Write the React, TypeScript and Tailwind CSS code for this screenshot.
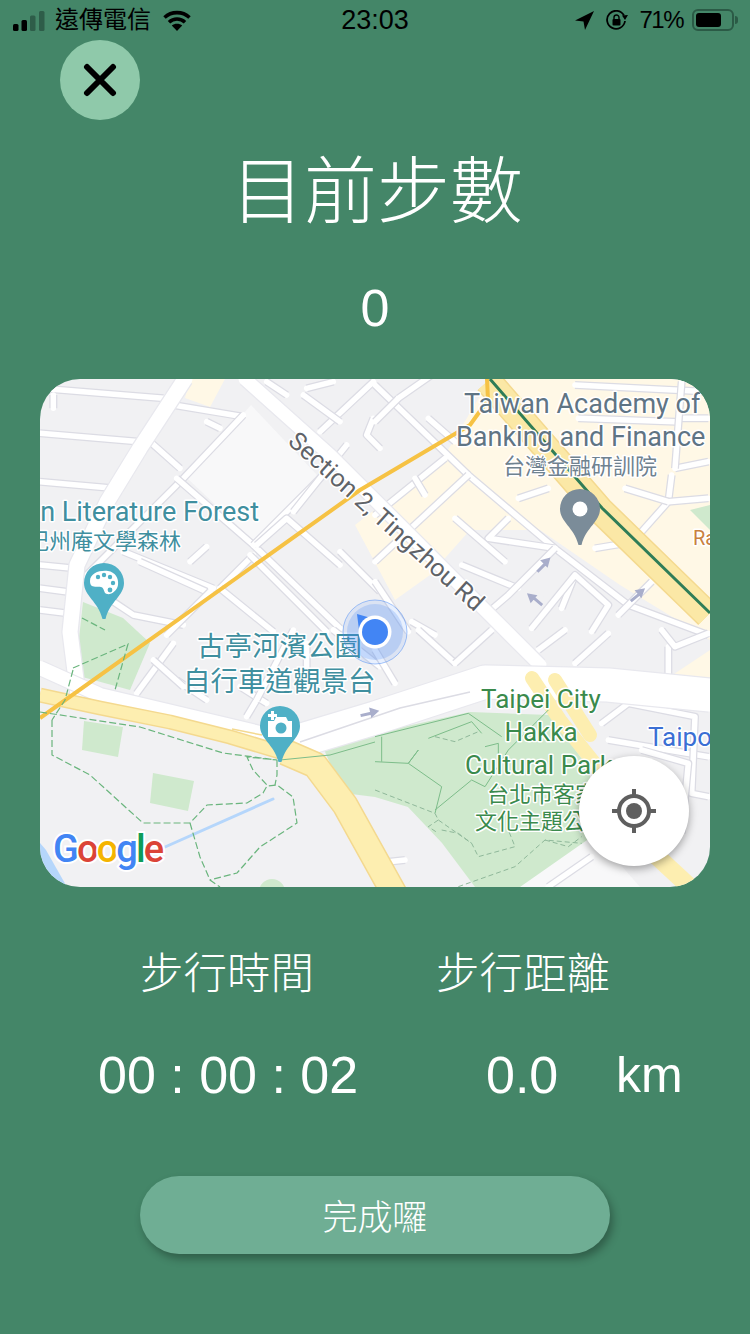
import React from "react";

const cjk = '"Noto Sans CJK TC", "Noto Sans CJK SC", sans-serif';

// streets are noted per map quarter, each quarter has its own origin and is 3x
const fromQuarter = (ox: number, oy: number, list: string[]) =>
  list.map((s) =>
    s
      .split(" ")
      .map((p) => {
        const [x, y] = p.split(",").map(Number);
        return `${x / 3 + ox},${y / 3 + oy}`;
      })
      .join(" ")
  );

const streets: string[] = [
  ...fromQuarter(40, 375, [
    "0,40 370,70",
    "400,90 610,125",
    "0,175 300,200",
    "0,320 220,340",
    "0,570 100,580",
    "0,640 80,650",
    "0,705 80,715",
    "610,120 430,310 270,470 130,610",
    "330,200 420,280",
    "410,310 640,510 900,760",
    "640,510 850,300",
    "650,510 740,430 900,570",
    "540,640 640,540",
    "630,540 860,770",
    "250,530 520,640",
    "300,560 500,650",
    "450,560 500,515",
    "760,410 920,210",
    "840,170 1000,20",
    "790,60 900,140",
    "800,40 880,20",
    "680,20 740,60",
    "220,680 280,720 430,750",
    "510,650 380,780",
    "900,530 1020,650",
    "540,640 700,770",
    "40,60 40,100",
    "500,140 540,160",
    "1000,130 980,180 1020,220",
  ]),
  ...fromQuarter(375, 375, [
    "0,30 280,300 540,520 760,690 1000,780",
    "70,70 0,140",
    "170,0 70,70",
    "280,300 0,560",
    "210,250 0,420",
    "120,310 150,360",
    "400,430 340,490 540,520",
    "240,430 390,560",
    "260,570 430,640",
    "540,520 400,660 330,720",
    "600,600 560,700",
    "430,370 520,340",
    "660,520 780,500",
    "890,300 880,380 800,470",
    "880,380 1000,370",
    "910,130 1000,130",
    "900,280 1000,260",
    "600,30 1000,50",
    "610,130 900,140",
    "830,620 730,720",
    "110,740 180,780",
    "0,620 100,770",
    "470,760 600,600 700,690 650,770",
    "160,130 240,200",
    "750,340 880,380",
    "920,20 900,280",
  ]),
  ...fromQuarter(40, 630, [
    "400,40 290,190",
    "410,150 500,210",
    "650,210 620,260",
    "340,90 430,170",
    "600,170 680,220",
    "760,0 650,210",
    "880,0 1020,110",
    "800,40 800,130",
  ]),
  ...fromQuarter(375, 630, [
    "130,0 240,100",
    "240,100 350,0",
    "490,60 570,0",
    "600,100 700,10",
    "880,50 880,140",
    "0,60 60,160",
    "700,330 1000,380",
    "680,280 760,220 960,260 950,490 1000,500",
    "800,360 940,400 920,610",
    "520,770 650,680",
    "1000,10 900,50 860,0",
    "0,700 90,690",
  ]),
];

const parkLines = fromQuarter(375, 630, [
  "0,320 280,250 380,320",
  "0,395 100,400 130,360 100,400 200,470 180,550",
  "290,450 180,540",
  "160,325 290,275 320,310",
  "290,450 330,470 400,360 520,240",
  "20,320 20,395",
  "330,350 370,340 370,400",
]);

const parkDashes = fromQuarter(375, 630, [
  "0,480 180,550 190,570 290,640 310,680 420,650 400,600",
  "200,600 250,610 290,640",
  "250,770 420,710 510,630 620,640",
  "190,570 160,590 190,610",
  "510,630 580,650 620,620",
  "180,320 240,335 310,305",
]);

function Road({ points, width, casing }: { points: string; width: number; casing: string }) {
  return (
    <>
      <polyline points={points} fill="none" stroke={casing} strokeWidth={width + 2.5} strokeLinejoin="round" />
      <polyline points={points} fill="none" stroke="#ffffff" strokeWidth={width} strokeLinecap="round" strokeLinejoin="round" />
    </>
  );
}

function Pin({ x, y, color, children }: { x: number; y: number; color: string; children: React.ReactNode }) {
  return (
    <g transform={`translate(${x} ${y})`}>
      <path d="M-20 0A20 20 0 1 1 20 0C20 13 6 18 1.5 36L-1.5 36C-6 18-20 13-20 0Z" fill={color} />
      {children}
    </g>
  );
}

function OneWay({ x, y, rot }: { x: number; y: number; rot: number }) {
  return (
    <path
      d="M-8 0L2 0L2-4L9 0L2 4L2 1.5L-8 1.5Z"
      transform={`translate(${x} ${y}) rotate(${rot})`}
      fill="#a9aecb"
      stroke="#a9aecb"
      strokeWidth={1.5}
    />
  );
}

function MapLabel({ x, y, size, color, anchor, text }: { x: number; y: number; size: number; color: string; anchor?: "start" | "middle" | "end"; text: string }) {
  return (
    <text x={x} y={y} fontSize={size} fill={color} textAnchor={anchor ?? "start"} stroke="#fff" strokeWidth={3} paintOrder="stroke" strokeLinejoin="round" fontFamily={`Roboto, ${cjk}`}>
      {text}
    </text>
  );
}

function MapDrawing() {
  return (
    <svg viewBox="40 379 670 508" className="block w-full h-full">
      <rect x="40" y="379" width="670" height="508" fill="#f1f1f3" />

      {/* the pale block under the road name, and the pale ground south of the big road */}
      <polygon points="251,405 317,475 254,541 187,478" fill="#f8f8f9" />
      <polygon points="440,887 500,887 590,830 640,887" fill="#f8f8f9" />

      {/* cream blocks on the right */}
      <polygon points="355,525 445,455 490,379 710,379 710,640 620,585 540,530 470,530 430,575 395,600" fill="#fff8e6" />
      <polygon points="190,379 225,379 210,407 185,398" fill="#fff8e6" />
      <polygon points="650,690 710,650 710,690" fill="#fff8e6" />
      <polygon points="540,540 600,590 560,610 500,560" fill="#f1f1f3" />
      <polygon points="430,580 470,545 510,600 480,610" fill="#f1f1f3" />

      {/* parks */}
      <polygon points="83,602 123,618 150,643 130,690 75,675" fill="#cfe9cd" />
      <polygon points="84,721 123,727 118,757 82,750" fill="#cfe9cd" />
      <polygon points="153,773 194,781 188,811 150,803" fill="#cfe9cd" />
      <polygon points="322,745 470,712 550,715 590,770 590,838 520,887 475,887 442,843 408,807 375,797 343,793" fill="#cfe9cd" />
      <polygon points="690,510 710,505 710,530" fill="#cfe9cd" />
      <circle cx="272" cy="892" r="13" fill="#cfe9cd" />

      {/* water */}
      <polygon points="40,843 46,850 67,887 40,887" fill="#b5d6fb" />
      <polyline points="165,847 273,799" stroke="#b5d6fb" strokeWidth={3} fill="none" strokeLinecap="round" />
      <polygon points="372,835 375,845 370,845" fill="#b5d6fb" />

      {streets.map((points) => (
        <Road key={points} points={points} width={5.5} casing="#dcdce4" />
      ))}

      {/* main white roads */}
      <Road points="185,379 140,448 107,502 77,565 70,632 78,695" width={15} casing="#e8e8ee" />
      <Road points="245,379 330,455 490,615 540,665" width={13} casing="#e8e8ee" />
      <Road points="40,668 100,695 260,733 300,745" width={14} casing="#e8e8ee" />
      <Road points="295,742 375,718 485,682 608,685 710,695" width={33} casing="#e8e8ee" />
      <polyline points="300,742 400,708 470,692" stroke="#dcdce4" strokeWidth={1.5} fill="none" />

      {/* yellow highways */}
      <polyline points="40,695 100,708 170,722 230,737 290,755" fill="none" stroke="#f4d98f" strokeWidth={15} strokeLinejoin="round" />
      <polyline points="40,695 100,708 170,722 230,737 290,755" fill="none" stroke="#fdeeb0" strokeWidth={12} strokeLinejoin="round" />
      <polyline points="285,752 315,765 345,805 395,895" fill="none" stroke="#f4d98f" strokeWidth={27} strokeLinejoin="round" />
      <polyline points="285,752 315,765 345,805 395,895" fill="none" stroke="#fdeeb0" strokeWidth={24} strokeLinejoin="round" />
      <polyline points="232,729 262,735" fill="none" stroke="#f4d98f" strokeWidth={1.5} />
      <polyline points="488,381 600,510 708,615" fill="none" stroke="#f4d98f" strokeWidth={28} />
      <polyline points="488,381 600,510 708,615" fill="none" stroke="#fbe8a6" strokeWidth={25} />
      <polyline points="532,678 560,720 600,770" fill="none" stroke="#fdeeb0" strokeWidth={14} strokeLinecap="round" />
      <polyline points="555,680 590,735" fill="none" stroke="#fdeeb0" strokeWidth={14} strokeLinecap="round" />
      <polyline points="650,850 690,887" fill="none" stroke="#fdeeb0" strokeWidth={18} />

      {/* rail and orange road */}
      <polyline points="490,379 602,508 710,613" fill="none" stroke="#2f7d57" strokeWidth={3} />
      <polyline points="40,718 360,490 470,425 488,400 487,379" fill="none" stroke="#f6c244" strokeWidth={4} strokeLinejoin="round" />

      {/* park trails */}
      {parkLines.map((p) => (
        <polyline key={p} points={p} fill="none" stroke="#7dbd8a" strokeWidth={1} />
      ))}
      <polyline points="280,760 330,755 375,742" fill="none" stroke="#7dbd8a" strokeWidth={1} />
      {parkDashes.map((p) => (
        <polyline key={p} points={p} fill="none" stroke="#8fb89a" strokeWidth={1} strokeDasharray="5 3" />
      ))}
      <g fill="none" stroke="#6ab57d" strokeWidth={1.2} strokeDasharray="7 3">
        <polyline points="52,720 52,755 90,775 143,823 190,823 207,805 247,803 263,793 267,786 277,785 293,797 297,823 260,847 237,873 210,880" />
        <polyline points="190,823 200,857 210,880 220,887" />
        <polyline points="40,712 140,727 223,753 277,760 247,757 253,770 267,785" />
        <polyline points="277,760 277,775 275,785" />
        <polyline points="73,670 65,700 52,720" />
        <polyline points="73,668 128,644 115,690" />
        <polyline points="82,618 105,630" />
      </g>

      <OneWay x={543} y={565} rot={-45} />
      <OneWay x={535} y={600} rot={-140} />
      <OneWay x={637} y={595} rot={-40} />
      <OneWay x={369} y={713} rot={-12} />

      {/* labels */}
      <MapLabel x={464} y={413} size={27} color="#5f7484" text="Taiwan Academy of" />
      <MapLabel x={456} y={446} size={27} color="#5f7484" text="Banking and Finance" />
      <MapLabel x={503} y={474} size={22} color="#6f8290" text="台灣金融研訓院" />
      <MapLabel x={259} y={521} size={27} color="#3f8f9f" anchor="end" text="an Literature Forest" />
      <MapLabel x={181} y={549} size={22} color="#3f8f9f" anchor="end" text="紀州庵文學森林" />
      <MapLabel x={197} y={656} size={27.5} color="#3f8f9f" text="古亭河濱公園" />
      <MapLabel x={183} y={691} size={27.5} color="#3f8f9f" text="自行車道觀景台" />
      <MapLabel x={541} y={708} size={26} color="#3a8a4c" anchor="middle" text="Taipei City" />
      <MapLabel x={541} y={741} size={26} color="#3a8a4c" anchor="middle" text="Hakka" />
      <MapLabel x={465} y={774} size={26} color="#3a8a4c" text="Cultural Park" />
      <MapLabel x={487} y={802} size={22} color="#3a8a4c" text="台北市客家" />
      <MapLabel x={475} y={829} size={22} color="#3a8a4c" text="文化主題公園" />
      <MapLabel x={648} y={746} size={26} color="#3b6fd4" text="Taipo" />
      <MapLabel x={693} y={545} size={20} color="#c9813f" text="Ra" />
      <g transform="translate(292 437) rotate(42)">
        <MapLabel x={0} y={8} size={25} color="#5f6368" text="Section 2, Tingzhou Rd" />
      </g>

      <Pin x={580} y={509} color="#7b8c99">
        <circle r="7.5" fill="#fff" />
      </Pin>
      <Pin x={104} y={583} color="#4fb0c6">
        <path d="M-14-2C-14-10-4-13 4-12C11-11 15-5 14 2C13 8 7 12 3 11C-1 10 1 5-3 4C-7 3-14 6-14-2Z" fill="#fff" />
        <g fill="#4fb0c6">
          <circle cx="-6" cy="-6" r="2.2" />
          <circle cx="0" cy="-8" r="2.2" />
          <circle cx="6" cy="-6" r="2.2" />
          <circle cx="9" cy="0" r="2.2" />
          <circle cx="6" cy="7" r="2.4" />
        </g>
      </Pin>
      <Pin x={280} y={726} color="#4fb0c6">
        <path d="M-12-5L-6-5L-4-9L6-9L8-5L12-5L12 11L-12 11Z" fill="#fff" />
        <path d="M-12-12h3v-3h3v3h3v3h-3v3h-3v-3h-3Z" fill="#fff" />
        <circle cx="1" cy="2" r="5.5" fill="#4fb0c6" />
      </Pin>

      {/* my location */}
      <circle cx="375" cy="632" r="32" fill="#4285f4" fillOpacity={0.12} stroke="#4285f4" strokeOpacity={0.6} strokeWidth={0.8} />
      <circle cx="375" cy="632" r="28" fill="#4285f4" fillOpacity={0.22} />
      <polygon points="357,614 371,618 359,630" fill="#4285f4" />
      <circle cx="375" cy="632" r="16.5" fill="#fff" />
      <circle cx="375" cy="632" r="13" fill="#4285f4" />

      {/* google mark */}
      <text x={53} y={862} fontSize={38} fontFamily="Roboto, sans-serif" fontWeight={500} stroke="#fff" strokeWidth={4} paintOrder="stroke" letterSpacing={-1.9}>
        <tspan fill="#4285f4">G</tspan>
        <tspan fill="#db4437">o</tspan>
        <tspan fill="#f4b400">o</tspan>
        <tspan fill="#4285f4">g</tspan>
        <tspan fill="#0f9d58">l</tspan>
        <tspan fill="#db4437">e</tspan>
      </text>
    </svg>
  );
}

function StatusBar() {
  return (
    <div className="h-10 grid grid-cols-3 items-center text-black">
      <div className="flex items-center pl-[13px]">
        <svg width="34" height="20" viewBox="0 0 34 20" className="mt-[1px]">
          <rect x="0" y="13" width="5.5" height="7" rx="1.5" fill="#000" />
          <rect x="8.5" y="9" width="5.5" height="11" rx="1.5" fill="#000" />
          <rect x="17" y="4.5" width="5.5" height="15.5" rx="1.5" fill="#2e5d49" />
          <rect x="26" y="0" width="5.5" height="20" rx="1.5" fill="#2e5d49" />
        </svg>
        <span className="ml-[8px] text-[24px] leading-none">遠傳電信</span>
        <svg width="28" height="21" viewBox="0 0 28 21" className="ml-[12px]">
          <path d="M1.5 7.5C8.5 1 19.5 1 26.5 7.5" fill="none" stroke="#000" strokeWidth="3.6" />
          <path d="M6 12.2C10.5 8 17.5 8 22 12.2" fill="none" stroke="#000" strokeWidth="3.6" />
          <path d="M14 21L8.8 15.6C11.6 13 16.4 13 19.2 15.6Z" fill="#000" />
        </svg>
      </div>
      <div className="text-center text-[27px] leading-none">23:03</div>
      <div className="flex items-center justify-end pr-[12px]">
        <svg width="19" height="19" viewBox="0 0 19 19">
          <path d="M19 0L0 9.5L8.5 10.5L10 19Z" fill="#000" />
        </svg>
        <svg width="23" height="20" viewBox="0 0 23 20" className="ml-[12px]">
          <path d="M18 5.5A9 9 0 1 0 19 11" fill="none" stroke="#000" strokeWidth="1.8" />
          <path d="M16 5.5L22 5L19 10Z" fill="#000" />
          <rect x="6.5" y="9" width="8" height="6.5" rx="1" fill="#000" />
          <path d="M8 9V7.5a2.5 2.5 0 0 1 5 0V9" fill="none" stroke="#000" strokeWidth="1.4" />
        </svg>
        <span className="ml-[10px] text-[24px] leading-none tracking-[-1.5px]">71%</span>
        <div className="ml-[9px] flex items-center">
          <div className="w-[42px] h-[22px] rounded-[6px] border-2 border-[#2b5a46] p-[2px]">
            <div className="h-full w-[25px] rounded-[3px] bg-black" />
          </div>
          <div className="ml-[1px] h-[8px] w-[3px] rounded-r-sm bg-[#2b5a46]" />
        </div>
      </div>
    </div>
  );
}

export default function App() {
  return (
    <div className="w-[750px] h-[1334px] bg-[#448668] overflow-hidden flex flex-col text-white" style={{ fontFamily: '"Liberation Sans", ' + cjk }}>
      <StatusBar />

      <button className="ml-[60px] w-20 h-20 shrink-0 rounded-full bg-[#8fc9aa] flex items-center justify-center">
        <svg width="34" height="34" viewBox="0 0 34 34">
          <path d="M4 4L30 30M30 4L4 30" stroke="#000" strokeWidth="6" strokeLinecap="round" />
        </svg>
      </button>

      <h1 className="mt-[20px] pl-[4px] text-center text-[73px] leading-[90px] font-light" style={{ fontFamily: cjk }}>目前步數</h1>
      <div className="mt-[50px] text-center text-[52px] leading-[56px]">0</div>

      <div className="relative mx-[40px] mt-[43px] h-[508px] shrink-0 rounded-[40px] overflow-hidden">
        <MapDrawing />
        <button className="absolute left-[539px] top-[377px] w-[110px] h-[110px] rounded-full bg-white shadow-[0_3px_8px_rgba(0,0,0,0.35)] flex items-center justify-center">
          <svg width="46" height="46" viewBox="0 0 46 46">
            <circle cx="23" cy="23" r="15" fill="none" stroke="#5f5f5f" strokeWidth="4" />
            <circle cx="23" cy="23" r="8" fill="#5f5f5f" />
            <path d="M23 1V8M23 38V45M1 23H8M38 23H45" stroke="#5f5f5f" strokeWidth="4" />
          </svg>
        </button>
      </div>

      <div className="mt-[58px] flex text-[43.5px] leading-[52px] font-light" style={{ fontFamily: cjk }}>
        <div className="ml-[140px] w-[296px]">步行時間</div>
        <div>步行距離</div>
      </div>

      <div className="mt-[50px] flex text-[52px] leading-[56px]">
        <div className="ml-[98px] w-[388px]">00 : 00 : 02</div>
        <div className="w-[130px]">0.0</div>
        <div className="text-[50px]">km</div>
      </div>

      <button className="mx-[140px] mt-[73px] h-[78px] shrink-0 rounded-full bg-[#6fae94] shadow-[3px_5px_8px_rgba(0,0,0,0.3)] text-[35px] font-light" style={{ fontFamily: cjk }}>
        完成囉
      </button>
    </div>
  );
}
